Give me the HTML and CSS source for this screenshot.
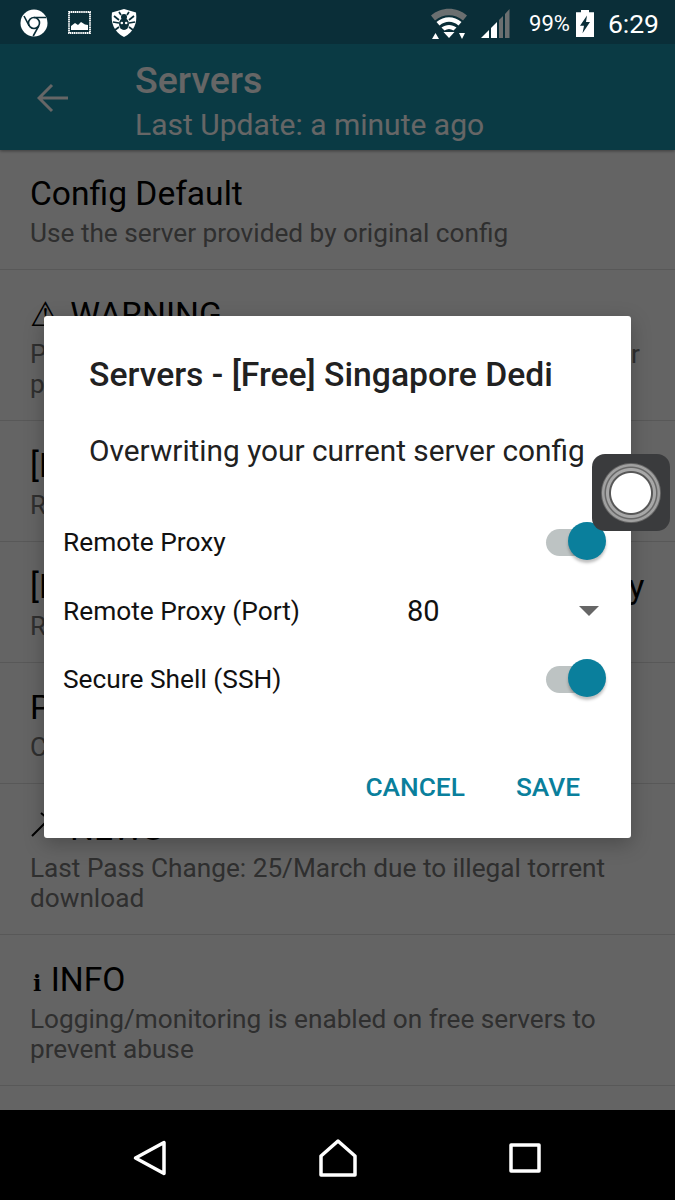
FILE: index.html
```html
<!DOCTYPE html>
<html>
 <head>
  <meta charset="utf-8">
  <title>Servers</title>
  <link rel="stylesheet" href="styles.css">
 </head>
 <body>
  <div class="phone">
   <div class="status-bar">
    <div class="status-left">
     <svg class="ic-chrome" width="28" height="28" viewBox="0 0 28 28"><circle cx="14" cy="14" r="13.5" fill="#fff"/><circle cx="14" cy="14" r="5.5" fill="none" stroke="#0a2e38" stroke-width="1.6"/><path d="M14 8.5H26M9.2 16.8L4 7M18.8 16.8L13.2 27" fill="none" stroke="#0a2e38" stroke-width="1.6"/></svg>
     <svg class="ic-picture" width="23" height="23" viewBox="0 0 23 23"><rect x="1" y="1" width="21" height="21" fill="none" stroke="#fff" stroke-width="1.8" stroke-dasharray="1.4 .5"/><path d="M3 19V15L7 12L10 14L13 11L17 13.500L20 14V19Z" fill="#fff"/></svg>
     <svg class="ic-shield" width="28" height="30" viewBox="0 0 28 30"><path d="M14 1L26 4.500C27.500 15 24 24 14 29C4 24 .5 15 2 4.500Z" fill="#fff"/><ellipse cx="14" cy="16" rx="5" ry="6" fill="#0a2e38"/><circle cx="14" cy="9" r="3" fill="#0a2e38"/><path d="M9 12L4 8M9 15L3 14M9 19L5 22M19 12L24 8M19 15L25 14M19 19L23 22M11 7L9 4M17 7L19 4" stroke="#0a2e38" stroke-width="1.700" fill="none"/><circle cx="11.800" cy="15" r="1.300" fill="#fff"/><circle cx="16.200" cy="15" r="1.300" fill="#fff"/></svg>
    </div>
    <div class="status-right">
     <svg class="ic-wifi" width="36" height="31" viewBox="0 0 36 31"><path d="M0 7.500C10 -1.500 26 -1.500 36 7.500L32 12.500C24 5.500 12 5.500 4 12.500Z" fill="#6b6f70"/><path d="M5.500 14C13 7.500 23 7.500 30.500 14L27.500 17.500C21.500 12.500 14.500 12.500 8.500 17.500Z" fill="#fff"/><path d="M10.500 19.500C15 16 21 16 25.500 19.500L22.500 22.500C19.500 20.500 16.500 20.500 13.500 22.500Z" fill="#fff"/><path d="M12.500 24H23.500L18 30Z" fill="#fff"/><path d="M1 31L4.500 25L8 31ZM28 25H34L31 31Z" fill="#fff"/></svg>
     <svg class="ic-signal" width="29" height="29" viewBox="0 0 29 29"><path d="M0 29L8 21V29Z" fill="#fff"/><path d="M10 19L16 13V29H10Z" fill="#fff"/><path d="M18 11L22 7V29H18ZM24 5L28.500 0V29H24Z" fill="#6b6f70"/></svg>
     <span class="battery-text">99%</span>
     <svg class="ic-battery" width="18" height="27" viewBox="0 0 18 29" preserveAspectRatio="none"><path d="M5 0H13V2.500H18V29H0V2.500H5Z" fill="#fff"/><path d="M11 6L4 17H8L6.500 25L14 13H10Z" fill="#0a2e38"/></svg>
     <span class="clock">6:29</span>
    </div>
   </div>
   <div class="app">
    <div class="toolbar">
     <svg class="ic-back" width="32" height="30" viewBox="0 0 32 30"><path d="M31 15H3M15 2L2 15L15 28" fill="none" stroke="#fff" stroke-width="3"/></svg>
     <div>
      <div class="toolbar-title">Servers</div>
      <div class="toolbar-sub">Last Update: a minute ago</div>
     </div>
    </div>
    <div class="row row-first">
     <div class="row-title">Config Default</div>
     <div class="row-sub">Use the server provided by original config</div>
    </div>
    <div class="row">
     <div class="row-title"><span class="warn-icon">⚠</span> WARNING</div>
     <div class="row-sub row-sub-wide">Please do not use these servers for torrents or other<br>p2p</div>
    </div>
    <div class="row">
     <div class="row-title">[Free] Singapore Dedi</div>
     <div class="row-sub">Remote Proxy</div>
    </div>
    <div class="row">
     <div class="row-title row-title-tight">[Free] Singapore Dedi SSL - Remote Proxy</div>
     <div class="row-sub">Remote Proxy</div>
    </div>
    <div class="row">
     <div class="row-title">Premium</div>
     <div class="row-sub">Config</div>
    </div>
    <div class="row">
     <div class="row-title row-news"><svg class="ic-pin" width="30" height="30" viewBox="0 0 30 30"><path d="M2 26L16 12M11 3L17 8L15 14" fill="none" stroke="#000" stroke-width="2"/></svg> NEWS</div>
     <div class="row-sub">Last Pass Change: 25/March due to illegal torrent<br>download</div>
    </div>
    <div class="row">
     <div class="row-title"><span class="info-i">i</span> INFO</div>
     <div class="row-sub">Logging/monitoring is enabled on free servers to<br>prevent abuse</div>
    </div>
    <div class="scrim"></div>
    <div class="dialog">
     <div class="dialog-title">Servers - [Free] Singapore Dedi</div>
     <div class="dialog-msg">Overwriting your current server config</div>
     <div class="option">
      <span>Remote Proxy</span>
      <span class="toggle"></span>
     </div>
     <div class="option option-port">
      <span class="port-label">Remote Proxy (Port)</span>
      <span class="port-value">80</span>
      <span class="caret"></span>
     </div>
     <div class="option">
      <span>Secure Shell (SSH)</span>
      <span class="toggle"></span>
     </div>
     <div class="actions">
      <span>CANCEL</span>
      <span>SAVE</span>
     </div>
    </div>
    <div class="float-btn"><span class="float-ring"></span></div>
   </div>
   <div class="nav-bar">
    <svg width="34" height="36" viewBox="0 0 34 36"><path d="M31 2.500V33.500L2.500 18Z" fill="none" stroke="#fff" stroke-width="3.500" stroke-linejoin="round"/></svg>
    <svg width="38" height="38" viewBox="0 0 38 38"><path d="M19 2L36 17V36H2V17Z" fill="none" stroke="#fff" stroke-width="3.500" stroke-linejoin="round"/></svg>
    <svg width="32" height="30" viewBox="0 0 32 30"><rect x="2" y="2" width="28" height="26" fill="none" stroke="#fff" stroke-width="3.500" stroke-linejoin="round"/></svg>
   </div>
  </div>
 </body>
</html>
```

FILE: styles.css
```css
body {
 margin: 0;
 font-family: Roboto, "Liberation Sans", sans-serif;
}
.phone {
 width: 675px;
 height: 1200px;
 display: flex;
 flex-direction: column;
 overflow: hidden;
 background: #000;
}

/* status bar */
.status-bar {
 height: 44px;
 flex: none;
 background: #0a2e38;
 display: flex;
 justify-content: space-between;
 align-items: center;
 color: #fff;
}
.status-left {
 display: flex;
 align-items: center;
 margin-left: 20px;
 margin-top: 1px;
}
.ic-picture { margin-left: 20px; }
.ic-shield { margin-left: 19px; }
.status-right {
 display: flex;
 align-items: center;
 margin-right: 16px;
 margin-top: 3px;
}
.ic-wifi { margin-right: 1px; }
.ic-signal { margin-left: 13px; }
.battery-text {
 margin-left: 19px;
 font-size: 22px;
}
.ic-battery { margin-left: 6px; }
.clock {
 margin-left: 14px;
 font-size: 26.500px;
}

/* app content, dimmed by the scrim */
.app {
 position: relative;
 height: 1066px;
 flex: none;
 background: #fafafa;
 overflow: hidden;
}
.toolbar {
 position: relative;
 height: 106px;
 background: #1991aa;
 display: flex;
 align-items: center;
 box-shadow: 0 1px 3px rgba(0, 0, 0, 0.4);
}
.ic-back {
 margin-left: 37px;
 margin-right: 66px;
 margin-top: 2px;
}
.toolbar-title {
 margin-top: 12px;
 font-size: 37.500px;
 font-weight: 500;
 color: #fff;
 line-height: 44px;
}
.toolbar-sub {
 font-size: 30px;
 color: #fff;
 line-height: 46px;
}
.row {
 padding: 25px 30px 21px;
 border-bottom: 1px solid #ddd;
}
.row-first { margin-top: -1px; }
.row-title {
 font-size: 33.600px;
 line-height: 40px;
 height: 40px;
 color: #000;
 white-space: nowrap;
}
.row-title-tight { word-spacing: -0.400px; }
.warn-icon { margin-right: 2px; }
.row-news {
 display: flex;
 align-items: center;
 gap: 10px;
}
.ic-pin { margin-top: -8px; }
.row-sub {
 font-size: 26.200px;
 line-height: 30px;
 margin-top: 4px;
 color: #757575;
 white-space: nowrap;
}
.row-sub-wide { word-spacing: 0.600px; }
.info-i {
 font-weight: 700;
 font-size: 22px;
 line-height: 1;
 font-family: "DejaVu Serif", serif;
 margin: 0 1px 0 3px;
}
.scrim {
 position: absolute;
 inset: 0;
 background: rgba(0, 0, 0, 0.6);
}

/* dialog */
.dialog {
 position: absolute;
 left: 44px;
 top: 272px;
 width: 587px;
 height: 522px;
 box-sizing: border-box;
 background: #fff;
 border-radius: 3px;
 box-shadow: 0 6px 20px rgba(0, 0, 0, 0.25);
 color: #212121;
 display: flex;
 flex-direction: column;
}
.dialog-title {
 margin: 38px 0 0 45px;
 font-size: 33.700px;
 font-weight: 500;
 line-height: 42px;
 white-space: nowrap;
}
.dialog-msg {
 margin: 35px 0 0 45px;
 font-size: 29.800px;
 line-height: 40px;
 white-space: nowrap;
}
.option {
 margin-left: 19px;
 margin-right: 25px;
 height: 68.500px;
 display: flex;
 align-items: center;
 justify-content: space-between;
 font-size: 26.300px;
 color: #111;
}
.dialog-msg + .option { margin-top: 37px; }
.port-label { width: 344px; }
.port-value {
 flex: 1;
 font-size: 29px;
}
.caret {
 width: 0;
 height: 0;
 margin-right: 7px;
 border-left: 10px solid transparent;
 border-right: 10px solid transparent;
 border-top: 10px solid #666;
}
.toggle {
 position: relative;
 width: 54px;
 height: 27px;
 border-radius: 14px;
 background: #bdc3c3;
 margin-right: 6px;
}
.toggle::after {
 content: "";
 position: absolute;
 right: -6px;
 top: -7px;
 width: 38px;
 height: 38px;
 border-radius: 50%;
 background: #0a7f9c;
 box-shadow: 0 3px 3px rgba(0, 0, 0, 0.25);
}
.actions {
 margin-top: auto;
 margin-bottom: 33px;
 margin-right: 51px;
 display: flex;
 justify-content: flex-end;
 gap: 51px;
 font-size: 26.300px;
 font-weight: 500;
 line-height: 36px;
 color: #0a7f9c;
}

/* floating touch button over the dialog edge */
.float-btn {
 position: absolute;
 left: 592px;
 top: 410px;
 width: 78px;
 height: 77px;
 border-radius: 13px;
 background: #3a3b3d;
 display: flex;
 align-items: center;
 justify-content: center;
}
.float-ring {
 width: 60px;
 height: 60px;
 border-radius: 50%;
 background: radial-gradient(circle closest-side, #fff 0 19.500px, #585858 20.500px 21.500px, #a8a8a8 22.500px 24.500px, #686868 25.500px 26px, #a0a0a0 27px 28.500px, #666 29.500px);
}

/* navigation */
.nav-bar {
 height: 90px;
 box-sizing: border-box;
 flex: none;
 background: #000;
 display: flex;
 align-items: center;
 padding: 5px 134px 0 133px;
 justify-content: space-between;
}
```
